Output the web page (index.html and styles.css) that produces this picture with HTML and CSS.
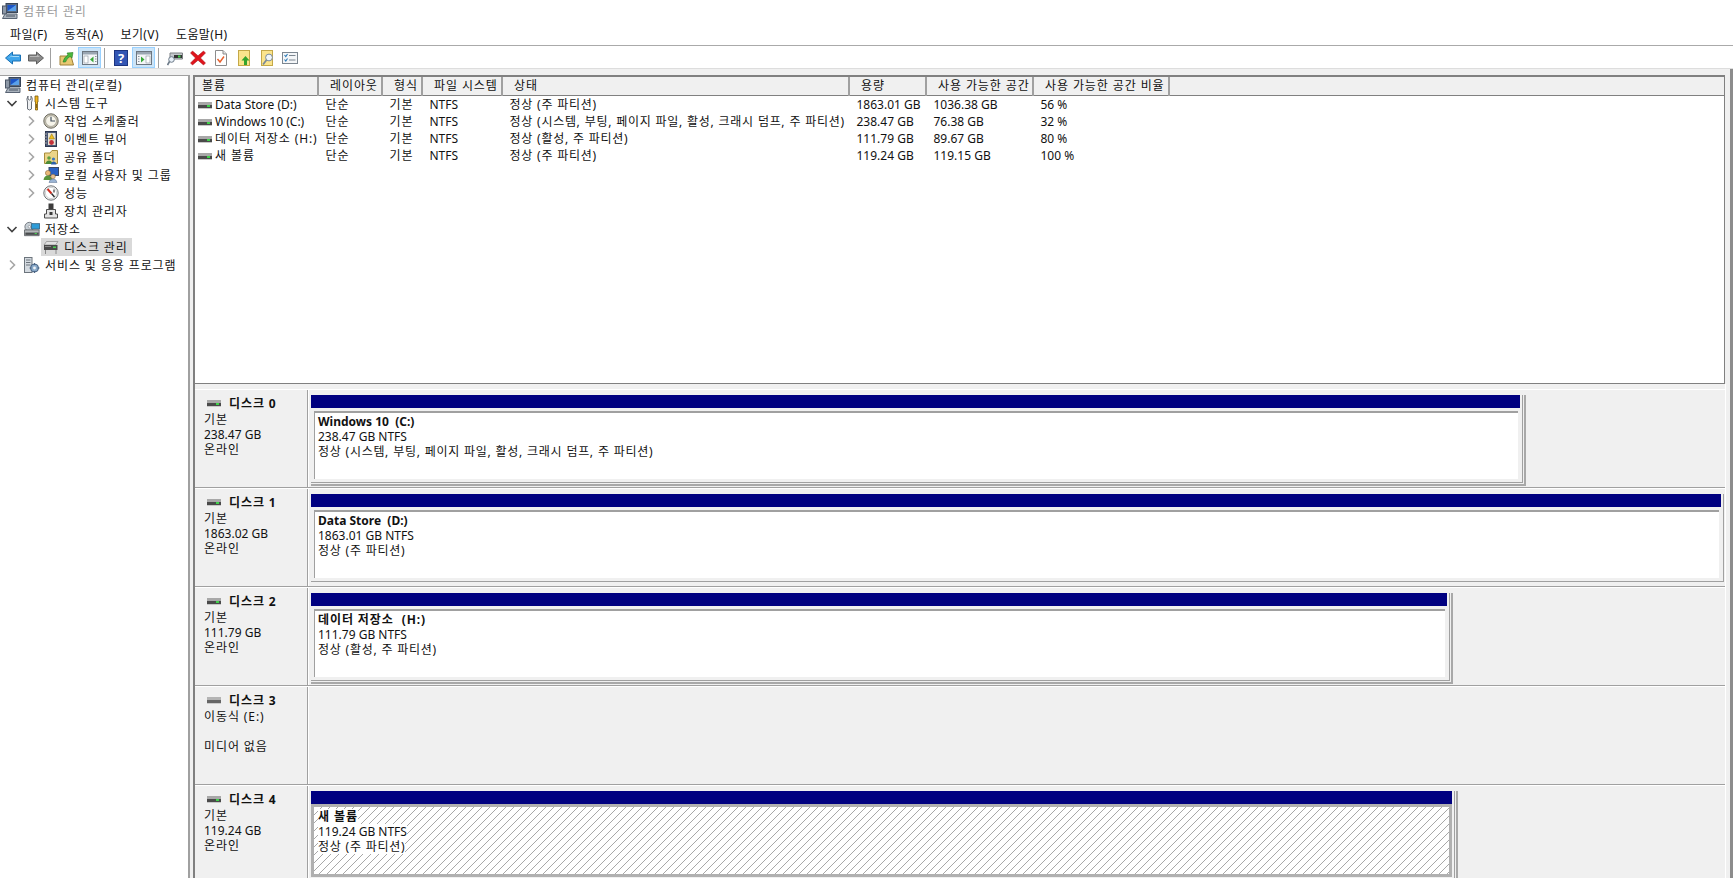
FILE: index.html
```html
<!DOCTYPE html>
<html lang="ko">
<head>
    <meta charset="UTF-8">
    <title>컴퓨터 관리</title>
    <link rel="stylesheet" href="styles.css">
</head>
<body>
    <svg class="defs" width="0" height="0">
        <symbol id="drive" viewBox="0 0 14 7">
            <rect x="0" y="0" width="14" height="3" fill="#a8a8a8"/>
            <rect x="0" y="3" width="14" height="3" fill="#4a4a4a"/>
            <rect x="9" y="3" width="3" height="2" fill="#3fd24a"/>
            <rect x="0" y="6" width="14" height="1" fill="#c8c8c8"/>
        </symbol>
        <symbol id="drive-off" viewBox="0 0 14 7">
            <rect x="0" y="0" width="14" height="3" fill="#b4b4b4"/>
            <rect x="0" y="3" width="14" height="3" fill="#666"/>
            <rect x="0" y="6" width="14" height="1" fill="#ccc"/>
        </symbol>
        <symbol id="chev-right" viewBox="0 0 16 16">
            <path d="M6 3.5 L10.5 8 L6 12.5" fill="none" stroke="#a6a6a6" stroke-width="1.6"/>
        </symbol>
        <symbol id="chev-down" viewBox="0 0 16 16">
            <path d="M3.5 6 L8 10.5 L12.5 6" fill="none" stroke="#404040" stroke-width="1.6"/>
        </symbol>
        <symbol id="computer" viewBox="0 0 16 16">
            <rect x="4" y="0.5" width="11.5" height="9" fill="#5a6a80" stroke="#39465a"/>
            <rect x="5.5" y="2" width="8.5" height="6" fill="#1c55c8"/>
            <path d="M5.5 8 L14 2 V8Z" fill="#5aa0ea"/>
            <rect x="0.5" y="3" width="4" height="8" fill="#8d98a6" stroke="#4a5565"/>
            <path d="M0.5 15.5 L3 11 H15 V15.5Z" fill="#a9b2bc" stroke="#596474"/>
            <path d="M4 13 H13" stroke="#4a5565"/>
        </symbol>
        <symbol id="tools" viewBox="0 0 16 16">
            <path d="M4 1 V4 L5.5 5 L7 4 V1 Q9 3 8 6 L7.5 7 V14 Q5.5 16 3.5 14 V7 Q2 4 4 1Z" fill="#eef0f2" stroke="#6a7078"/>
            <path d="M11 1 H14 V7 H13.5 V15 H11.5 V7 H11Z" fill="#f2b61e" stroke="#7a5a10" stroke-width=".8"/>
            <path d="M12.5 9 V13" stroke="#8a6410"/>
        </symbol>
        <symbol id="clock" viewBox="0 0 16 16">
            <circle cx="8" cy="8" r="7.2" fill="#c8c4b4" stroke="#6c6a60"/>
            <circle cx="8" cy="8" r="5.4" fill="#f6f4ea" stroke="#8e8c80" stroke-width=".6"/>
            <path d="M8 3.8 V8 H12" fill="none" stroke="#44505e" stroke-width="1.2"/>
        </symbol>
        <symbol id="eventlog" viewBox="0 0 16 16">
            <rect x="2.5" y="0.5" width="11" height="15" fill="#4c5a78" stroke="#2e3850"/>
            <rect x="5" y="2" width="7.5" height="12" fill="#e8e4d4"/>
            <path d="M8.7 2.8 L11.5 8 H6Z" fill="#f0c020" stroke="#8a6a10" stroke-width=".5"/>
            <circle cx="8.5" cy="11.5" r="2.4" fill="#c4323a"/>
            <path d="M1.5 3 H4 M1.5 6 H4 M1.5 9 H4 M1.5 12 H4" stroke="#a8a8a8"/>
        </symbol>
        <symbol id="share" viewBox="0 0 16 16">
            <path d="M1.5 4 V14.5 H14.5 V1.5 H9 L7 4Z" fill="#ecd488" stroke="#a88c3c"/>
            <circle cx="6" cy="9" r="1.8" fill="#60a040"/>
            <path d="M2.5 15 Q3 11.5 6 11.5 Q9 11.5 9.5 15Z" fill="#4c8c38"/>
            <circle cx="10.5" cy="10" r="1.6" fill="#3c78c0"/>
            <path d="M8 15.5 Q8.5 12.5 10.5 12.5 Q13 12.5 13.5 15.5Z" fill="#2c60a8"/>
        </symbol>
        <symbol id="users" viewBox="0 0 16 16">
            <rect x="6" y="0.5" width="9.5" height="8" fill="#2a62c4" stroke="#3a4a66"/>
            <circle cx="5" cy="6" r="2.6" fill="#e8b878" stroke="#7a5a30" stroke-width=".5"/>
            <path d="M0.5 13 Q1 8.5 5 8.5 Q9 8.5 9.5 13Z" fill="#58943c"/>
            <circle cx="10" cy="9.5" r="2.3" fill="#e8c090" stroke="#7a5a30" stroke-width=".5"/>
            <path d="M6 15.5 Q6.5 12 10 12 Q13.5 12 14 15.5Z" fill="#9ab4d4" stroke="#5a7090" stroke-width=".5"/>
        </symbol>
        <symbol id="perf" viewBox="0 0 16 16">
            <circle cx="8" cy="8" r="7.2" fill="#f4f4f0" stroke="#6e7276"/>
            <circle cx="8" cy="8" r="5.6" fill="#fff" stroke="#b4b8bc" stroke-width=".6"/>
            <path d="M4.5 4 L8.5 8.5" stroke="#d02c20" stroke-width="2"/>
            <path d="M8.5 8.5 L11.5 12" stroke="#2a2a2a" stroke-width="1.4"/>
            <path d="M11 4.5 V7.5" stroke="#3a3a3a" stroke-width="1.2"/>
        </symbol>
        <symbol id="device" viewBox="0 0 16 16">
            <rect x="5.5" y="0.5" width="5" height="6" fill="#3c3c3c"/>
            <path d="M3.5 6.5 H12.5 V11 H14.5 V15 H1.5 V11 H3.5Z" fill="#e4e4e4" stroke="#4c4c4c"/>
            <rect x="6.5" y="9" width="3" height="3" fill="#3c3c3c"/>
        </symbol>
        <symbol id="storage" viewBox="0 0 18 16">
            <circle cx="6" cy="5.5" r="5" fill="#c8d0d6" stroke="#6a7078"/>
            <circle cx="6" cy="5.5" r="1.4" fill="#fff" stroke="#6a7078" stroke-width=".6"/>
            <rect x="8.5" y="2" width="9" height="6" fill="#2e9cd8" stroke="#3a6a8a"/>
            <path d="M0.5 9 H17 V15.5 H0.5Z" fill="#b4b8ba" stroke="#5c6064"/>
            <rect x="1.5" y="12" width="15" height="2.6" fill="#4a4c4e"/>
            <rect x="12" y="12.5" width="2.5" height="1.2" fill="#48d050"/>
        </symbol>
        <symbol id="diskmgmt" viewBox="0 0 16 16">
            <path d="M3.5 2.5 H15 L12.5 6 H1Z" fill="#e2e2e2" stroke="#8a8a8a" stroke-width=".7"/>
            <rect x="1" y="6" width="13.5" height="5" fill="#4a4a4a"/>
            <rect x="10" y="7.5" width="3" height="1.6" fill="#4ad052"/>
            <rect x="2" y="7" width="6" height="1" fill="#8a8a8a"/>
            <path d="M2.5 11 V15 M13 11 V15" stroke="#8a8a8a"/>
        </symbol>
        <symbol id="services" viewBox="0 0 16 16">
            <rect x="0.5" y="0.5" width="7.5" height="15" fill="#d4dae0" stroke="#6c747c"/>
            <path d="M2 3 H6.5 M2 5.5 H6.5 M2 8 H6.5" stroke="#6c747c"/>
            <circle cx="10.5" cy="11" r="4" fill="#88a8c8" stroke="#4a6484"/>
            <circle cx="10.5" cy="11" r="1.4" fill="#f0f4f8"/>
            <path d="M10.5 6 V8 M10.5 14 V16 M5.5 11 H7.5 M13.5 11 H15.5" stroke="#4a6484" stroke-width="1.2"/>
        </symbol>
    </svg>

    <div class="window">
        <div class="titlebar">
            <svg class="icon"><use href="#computer"/></svg>
            <span class="title-text ko">컴퓨터 관리</span>
        </div>

        <div class="menubar">
            <span>파일(F)</span>
            <span>동작(A)</span>
            <span>보기(V)</span>
            <span>도움말(H)</span>
        </div>

        <div class="toolbar">
            <div class="tool"><svg class="icon" viewBox="0 0 16 16"><path d="M0.5 8 L7.5 2 V5 H15.5 V11 H7.5 V14Z" fill="#3ea4ea" stroke="#1a70b4"/><path d="M3 8 L7 5.5 V7 H14 V6 H8" fill="#a8dcf8"/></svg></div>
            <div class="tool"><svg class="icon" viewBox="0 0 16 16"><path d="M15.5 8 L8.5 2 V5 H0.5 V11 H8.5 V14Z" fill="#8a8a8a" stroke="#5c5c5c"/><path d="M2 6 H9 V4.5 L12 7 H2Z" fill="#b8b8b8"/></svg></div>
            <div class="tool-sep"></div>
            <div class="tool"><svg class="icon" viewBox="0 0 16 16"><path d="M1 6 H12 L14.5 15 H1Z" fill="#e8c872" stroke="#a08038"/><path d="M4 12 Q5 7 9 5 L8 3 L14 2.5 L13 8 L11 6.5 Q8 8 6.5 12Z" fill="#4ab83c" stroke="#2a7a24" stroke-width=".6"/></svg></div>
            <div class="tool active"><svg class="icon" viewBox="0 0 16 16"><rect x="0.5" y="1.5" width="15" height="13" fill="#f4f6f8" stroke="#6c7680"/><rect x="1" y="2" width="14" height="2.5" fill="#9aa6b2"/><rect x="2" y="6" width="4" height="7" fill="#fff" stroke="#8a949e" stroke-width=".6"/><path d="M11.5 6.5 V12.5 L8 9.5Z" fill="#38a838"/><path d="M13 6.5 H14.5 M13 9 H14.5 M13 11.5 H14.5" stroke="#8a949e"/></svg></div>
            <div class="tool-sep"></div>
            <div class="tool"><svg class="icon" viewBox="0 0 16 16"><rect x="1.5" y="0.5" width="13" height="15" fill="#3356b4" stroke="#1c3480"/><text class="help-mark" x="8" y="13" text-anchor="middle">?</text></svg></div>
            <div class="tool active"><svg class="icon" viewBox="0 0 16 16"><rect x="0.5" y="1.5" width="15" height="13" fill="#f4f6f8" stroke="#6c7680"/><rect x="1" y="2" width="14" height="2.5" fill="#9aa6b2"/><rect x="10" y="6" width="4" height="7" fill="#fff" stroke="#8a949e" stroke-width=".6"/><path d="M5 6.5 V12.5 L8.5 9.5Z" fill="#38a838"/><path d="M2 6.5 H3.5 M2 9 H3.5 M2 11.5 H3.5" stroke="#8a949e"/></svg></div>
            <div class="tool-sep"></div>
            <div class="tool"><svg class="icon" viewBox="0 0 16 16"><path d="M3 3 H15.5 V9 H3Z" fill="#c4c8cc" stroke="#7c8084"/><rect x="7" y="5" width="8" height="3" fill="#333"/><rect x="11" y="5.5" width="2.5" height="2" fill="#3fd24a"/><circle cx="4.5" cy="9.5" r="2.8" fill="#e8f0f8" stroke="#6c7a88"/><path d="M2.5 11.5 L0.5 15" stroke="#6c7a88" stroke-width="1.6"/></svg></div>
            <div class="tool"><svg class="icon" viewBox="0 0 16 16"><path d="M2.5 1 L8 5.8 L13.5 1 L15.5 3 L10.5 8 L15.5 13 L13.5 15 L8 10.2 L2.5 15 L0.5 13 L5.5 8 L0.5 3Z" fill="#e0141c" stroke="#a00c10" stroke-width=".5"/></svg></div>
            <div class="tool"><svg class="icon" viewBox="0 0 16 16"><path d="M2.5 0.5 H10 L13.5 4 V15.5 H2.5Z" fill="#fff" stroke="#8c8c8c"/><path d="M10 0.5 V4 H13.5" fill="#e4e4e4" stroke="#8c8c8c"/><path d="M4.5 9 L7 12 L11 6.5" fill="none" stroke="#e8602c" stroke-width="1.4"/></svg></div>
            <div class="tool"><svg class="icon" viewBox="0 0 16 16"><rect x="2.5" y="0.5" width="11" height="15" fill="#fbe48c" stroke="#c4a848"/><path d="M9.5 6 L13.5 10.5 H11 V15 H8 V10.5 H5.5Z" fill="#34a42c"/></svg></div>
            <div class="tool"><svg class="icon" viewBox="0 0 16 16"><rect x="2.5" y="0.5" width="11" height="15" fill="#fbe48c" stroke="#c4a848"/><circle cx="10" cy="7.5" r="3.4" fill="#f0f6fa" stroke="#7a8a98"/><path d="M7.5 10 L4 14.5" stroke="#7a8a98" stroke-width="1.8"/></svg></div>
            <div class="tool"><svg class="icon" viewBox="0 0 16 16"><rect x="0.5" y="2.5" width="15" height="11" fill="#f4f6f8" stroke="#7c8690"/><path d="M2.5 5 L3.8 6.5 L5.5 4 M2.5 9.5 L3.8 11 L5.5 8.5" fill="none" stroke="#2c7ab8" stroke-width="1.1"/><path d="M7 5.5 H13.5 M7 10 H13.5" stroke="#7c8690"/></svg></div>
        </div>

        <div class="workspace">
            <div class="tree">
                <div class="tree-row lv0"><svg class="icon"><use href="#computer"/></svg><span class="ko">컴퓨터 관리(로컬)</span></div>
                <div class="tree-row lv1"><svg class="chev"><use href="#chev-down"/></svg><svg class="icon"><use href="#tools"/></svg><span class="ko">시스템 도구</span></div>
                <div class="tree-row lv2"><svg class="chev"><use href="#chev-right"/></svg><svg class="icon"><use href="#clock"/></svg><span class="ko">작업 스케줄러</span></div>
                <div class="tree-row lv2"><svg class="chev"><use href="#chev-right"/></svg><svg class="icon"><use href="#eventlog"/></svg><span class="ko">이벤트 뷰어</span></div>
                <div class="tree-row lv2"><svg class="chev"><use href="#chev-right"/></svg><svg class="icon"><use href="#share"/></svg><span class="ko">공유 폴더</span></div>
                <div class="tree-row lv2"><svg class="chev"><use href="#chev-right"/></svg><svg class="icon"><use href="#users"/></svg><span class="ko">로컬 사용자 및 그룹</span></div>
                <div class="tree-row lv2"><svg class="chev"><use href="#chev-right"/></svg><svg class="icon"><use href="#perf"/></svg><span class="ko">성능</span></div>
                <div class="tree-row lv2"><span class="chev"></span><svg class="icon"><use href="#device"/></svg><span class="ko">장치 관리자</span></div>
                <div class="tree-row lv1"><svg class="chev"><use href="#chev-down"/></svg><svg class="icon"><use href="#storage"/></svg><span class="ko">저장소</span></div>
                <div class="tree-row lv2"><span class="chev"></span><div class="selected"><svg class="icon"><use href="#diskmgmt"/></svg><span class="ko">디스크 관리</span></div></div>
                <div class="tree-row lv1"><svg class="chev"><use href="#chev-right"/></svg><svg class="icon"><use href="#services"/></svg><span class="ko">서비스 및 응용 프로그램</span></div>
            </div>

            <div class="main">
                <div class="volume-list">
                    <table>
                        <colgroup>
                            <col class="c-name"><col class="c-layout"><col class="c-type"><col class="c-fs"><col class="c-status"><col class="c-size"><col class="c-free"><col class="c-pct"><col>
                        </colgroup>
                        <thead>
                            <tr>
                                <th class="first ko">볼륨</th><th class="ko">레이아웃</th><th class="ko">형식</th><th class="ko">파일 시스템</th><th class="ko">상태</th><th class="ko">용량</th><th class="ko">사용 가능한 공간</th><th class="ko">사용 가능한 공간 비율</th><th></th>
                            </tr>
                        </thead>
                        <tbody>
                            <tr><td class="vol"><svg class="drive"><use href="#drive"/></svg>Data Store (D:)</td><td class="ko">단순</td><td class="ko">기본</td><td>NTFS</td><td class="status">정상 (주 파티션)</td><td>1863.01 GB</td><td>1036.38 GB</td><td>56 %</td><td></td></tr>
                            <tr><td class="vol"><svg class="drive"><use href="#drive"/></svg>Windows 10 (C:)</td><td class="ko">단순</td><td class="ko">기본</td><td>NTFS</td><td class="status">정상 (시스템, 부팅, 페이지 파일, 활성, 크래시 덤프, 주 파티션)</td><td>238.47 GB</td><td>76.38 GB</td><td>32 %</td><td></td></tr>
                            <tr><td class="vol"><svg class="drive"><use href="#drive"/></svg><span class="ko">데이터 저장소 (H:)</span></td><td class="ko">단순</td><td class="ko">기본</td><td>NTFS</td><td class="status">정상 (활성, 주 파티션)</td><td>111.79 GB</td><td>89.67 GB</td><td>80 %</td><td></td></tr>
                            <tr><td class="vol"><svg class="drive"><use href="#drive"/></svg><span class="ko">새 볼륨</span></td><td class="ko">단순</td><td class="ko">기본</td><td>NTFS</td><td class="status">정상 (주 파티션)</td><td>119.24 GB</td><td>119.15 GB</td><td>100 %</td><td></td></tr>
                        </tbody>
                    </table>
                </div>

                <div class="disks">
                    <div class="disk">
                        <div class="disk-info">
                            <div class="disk-name"><svg class="disk-icon"><use href="#drive"/></svg><b class="ko">디스크 0</b></div>
                            <div class="ko">기본</div>
                            <div>238.47 GB</div>
                            <div class="ko">온라인</div>
                        </div>
                        <div class="disk-map">
                            <div class="partition w-c">
                                <div class="part-box">
                                    <div class="part-bar"></div>
                                    <div class="part-body">
                                        <b>Windows 10 &nbsp;(C:)</b>
                                        <div>238.47 GB NTFS</div>
                                        <div class="status">정상 (시스템, 부팅, 페이지 파일, 활성, 크래시 덤프, 주 파티션)</div>
                                    </div>
                                </div>
                            </div>
                        </div>
                    </div>

                    <div class="disk">
                        <div class="disk-info">
                            <div class="disk-name"><svg class="disk-icon"><use href="#drive"/></svg><b class="ko">디스크 1</b></div>
                            <div class="ko">기본</div>
                            <div>1863.02 GB</div>
                            <div class="ko">온라인</div>
                        </div>
                        <div class="disk-map">
                            <div class="partition w-d">
                                <div class="part-box">
                                    <div class="part-bar"></div>
                                    <div class="part-body">
                                        <b>Data Store &nbsp;(D:)</b>
                                        <div>1863.01 GB NTFS</div>
                                        <div class="status">정상 (주 파티션)</div>
                                    </div>
                                </div>
                            </div>
                        </div>
                    </div>

                    <div class="disk">
                        <div class="disk-info">
                            <div class="disk-name"><svg class="disk-icon"><use href="#drive"/></svg><b class="ko">디스크 2</b></div>
                            <div class="ko">기본</div>
                            <div>111.79 GB</div>
                            <div class="ko">온라인</div>
                        </div>
                        <div class="disk-map">
                            <div class="partition w-h">
                                <div class="part-box">
                                    <div class="part-bar"></div>
                                    <div class="part-body">
                                        <b class="ko">데이터 저장소 &nbsp;(H:)</b>
                                        <div>111.79 GB NTFS</div>
                                        <div class="status">정상 (활성, 주 파티션)</div>
                                    </div>
                                </div>
                            </div>
                        </div>
                    </div>

                    <div class="disk">
                        <div class="disk-info">
                            <div class="disk-name"><svg class="disk-icon"><use href="#drive-off"/></svg><b class="ko">디스크 3</b></div>
                            <div class="ko">이동식 (E:)</div>
                            <div class="blank"></div>
                            <div class="ko">미디어 없음</div>
                        </div>
                        <div class="disk-map"></div>
                    </div>

                    <div class="disk">
                        <div class="disk-info">
                            <div class="disk-name"><svg class="disk-icon"><use href="#drive"/></svg><b class="ko">디스크 4</b></div>
                            <div class="ko">기본</div>
                            <div>119.24 GB</div>
                            <div class="ko">온라인</div>
                        </div>
                        <div class="disk-map">
                            <div class="partition w-new">
                                <div class="part-box">
                                    <div class="part-bar"></div>
                                    <div class="part-body hatched">
                                        <b class="ko">새 볼륨</b>
                                        <div>119.24 GB NTFS</div>
                                        <div class="status">정상 (주 파티션)</div>
                                    </div>
                                </div>
                            </div>
                        </div>
                    </div>
                </div>
            </div>
        </div>
    </div>
</body>
</html>
```

FILE: styles.css
```css
html, body {
    margin: 0;
    height: 100%;
    overflow: hidden;
}
body {
    font-family: "Noto Sans", "Noto Sans CJK KR", sans-serif;
    font-size: 12px;
    color: #111;
    background-color: #fff;
}
.defs {
    position: absolute;
}
.ko {
    letter-spacing: 0.9px;
}
.status {
    letter-spacing: 0.7px;
    word-spacing: 0.3px;
}
.icon {
    width: 16px;
    height: 16px;
    flex: none;
}
.window {
    height: 878px;
    display: flex;
    flex-direction: column;
}
.titlebar {
    height: 22px;
    display: flex;
    align-items: center;
    padding-left: 2px;
    gap: 5px;
}
.title-text {
    color: #999;
}
.menubar {
    height: 23px;
    display: flex;
    align-items: center;
    gap: 17px;
    padding-left: 10px;
    letter-spacing: 0.4px;
    border-bottom: 1px solid #aaa;
}
.toolbar {
    height: 21px;
    display: flex;
    align-items: center;
    padding: 1px 0 0 1px;
    border-bottom: 1px solid #ddd;
}
.tool {
    width: 23px;
    height: 21px;
    box-sizing: border-box;
    display: flex;
    align-items: center;
    justify-content: center;
}
.tool.active {
    background-color: #cce4f7;
    border: 1px solid #99d1ff;
}
.tool-sep {
    width: 1px;
    height: 20px;
    margin: 0 4px 0 3px;
    background-color: #a0a0a0;
}
.help-mark {
    font-size: 13px;
    font-weight: 700;
    fill: #fff;
}
.workspace {
    flex: 1;
    min-height: 0;
    display: flex;
    background-color: #f0f0f0;
    padding-top: 6px;
    border-right: 3px solid #8c8c8c;
}
.tree {
    width: 188px;
    background-color: #fff;
    border-top: 1px solid #a0a0a0;
    border-right: 2px solid #a0a0a0;
    margin-right: 3px;
}
.tree-row {
    height: 18px;
    display: flex;
    align-items: center;
    white-space: nowrap;
}
.tree-row .icon {
    margin-right: 5px;
}
.lv0 {
    padding-left: 5px;
}
.lv1 {
    padding-left: 4px;
}
.lv2 {
    padding-left: 23px;
}
.chev {
    width: 16px;
    height: 16px;
    margin-right: 4px;
    flex: none;
}
.selected {
    display: flex;
    align-items: center;
    height: 18px;
    margin-left: -2px;
    padding: 0 4px 0 2px;
    background-color: #d9d9d9;
}
.main {
    flex: 1;
    min-width: 0;
    display: flex;
    flex-direction: column;
    margin-right: 4px;
}
.volume-list {
    height: 306px;
    background-color: #fff;
    border: 2px solid #808080;
    border-bottom-width: 1px;
    border-right-width: 1px;
    margin-right: 1px;
}
table {
    width: 100%;
    table-layout: fixed;
    border-collapse: collapse;
}
.c-name { width: 123px; }
.c-layout { width: 64px; }
.c-type { width: 40px; }
.c-fs { width: 80px; }
.c-status { width: 347px; }
.c-size { width: 77px; }
.c-free { width: 107px; }
.c-pct { width: 136px; }
th {
    height: 18px;
    padding: 0 0 0 11px;
    font-weight: 400;
    text-align: left;
    white-space: nowrap;
    background-color: #f0f0f0;
    border-right: 2px solid #a0a0a0;
    border-bottom: 1px solid #808080;
    box-sizing: border-box;
    line-height: 15px;
}
th.first {
    padding-left: 7px;
}
th:last-child {
    border-right: none;
}
td {
    height: 17px;
    padding: 1px 0 0 7.5px;
    white-space: nowrap;
    line-height: 15px;
    box-sizing: border-box;
}
td.vol {
    padding-left: 3px;
}
.drive {
    width: 14px;
    height: 7px;
    margin-right: 3px;
}
.disks {
    flex: 1;
    min-height: 0;
    padding-top: 5px;
    border-left: 2px solid #808080;
    border-right: 1px solid #fff;
}
.disk {
    height: 99px;
    box-sizing: border-box;
    display: flex;
    border-top: 1px solid #fff;
    border-bottom: 1px solid #a0a0a0;
}
.disk-info {
    width: 113px;
    flex: none;
    box-sizing: border-box;
    padding: 7px 0 0 9px;
    line-height: 15px;
    border-right: 1px solid #a0a0a0;
}
.disk-name {
    display: flex;
    align-items: center;
    height: 15px;
    margin: -1px 0 1px;
    padding-left: 3px;
    gap: 8px;
}
.disk-icon {
    width: 14px;
    height: 7px;
}
.blank {
    height: 15px;
}
.disk-map {
    flex: 1;
    min-width: 0;
    padding: 5px 0 0 2px;
    border-left: 1px solid #fff;
}
.partition {
    height: 91px;
    box-sizing: border-box;
    padding-right: 1px;
    border-right: 2px solid #a8a8a8;
    border-bottom: 2px solid #a8a8a8;
}
.part-box {
    height: 88px;
    box-sizing: border-box;
    padding-right: 2px;
    border-right: 1px solid #a0a0a0;
    border-bottom: 1px solid #a0a0a0;
}
.w-c { width: 1215px; }
.w-d {
    width: 1413px;
    padding-right: 0;
    border: none;
}
.w-h { width: 1142px; }
.w-new { width: 1147px; }
.part-bar {
    height: 13px;
    background-color: #000080;
}
.part-body {
    margin: 3px 2px 2px 3px;
    height: 68px;
    box-sizing: border-box;
    padding: 1px 0 0 3px;
    line-height: 15px;
    background-color: #fff;
    border-top: 2px solid #a0a0a0;
    border-left: 1px solid #a0a0a0;
}
.part-body > * {
    display: block;
}
.hatched {
    margin: 0;
    padding: 2px 0 0 4px;
    height: 73px;
    background: #fff url("data:image/svg+xml,%3Csvg xmlns='http://www.w3.org/2000/svg' width='8' height='8'%3E%3Cpath d='M7 0h1v1h-1zM6 1h1v1h-1zM5 2h1v1h-1zM4 3h1v1h-1zM3 4h1v1h-1zM2 5h1v1h-1zM1 6h1v1h-1zM0 7h1v1h-1z' fill='%23a8a8a8'/%3E%3C/svg%3E");
    border: 3px solid #b0b0b0;
}
.hatched > * {
    width: fit-content;
    background-color: #fff;
}
```
